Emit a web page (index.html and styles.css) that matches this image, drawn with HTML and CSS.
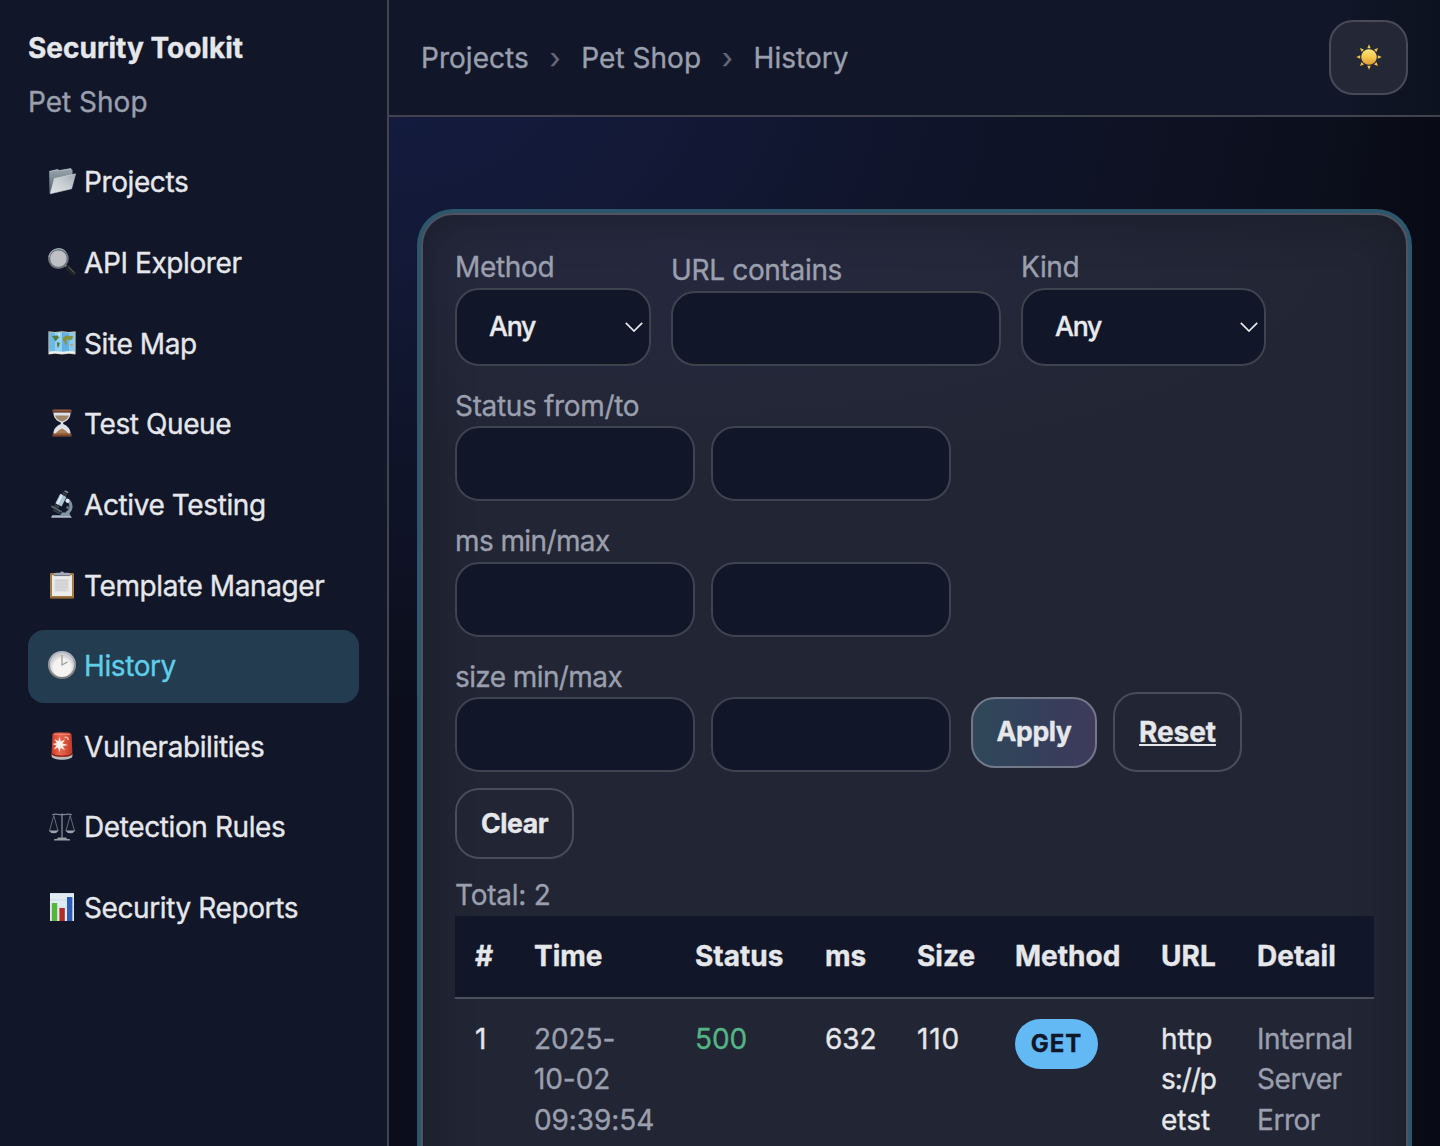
FILE: index.html
```html
<!DOCTYPE html>
<html lang="en">
<head>
<meta charset="utf-8">
<title>Security Toolkit</title>
<link rel="stylesheet" href="styles.css">
</head>
<body>
<div class="app">
  <aside class="sidebar">
    <div class="brand">Security Toolkit</div>
    <div class="project">Pet Shop</div>
    <nav class="nav">
      <a class="nav-item">
        <svg class="icon" viewBox="0 0 28 28">
          <defs>
            <linearGradient id="fb" x1="0" y1="0" x2="0" y2="1"><stop offset="0" stop-color="#9aa6ae"/><stop offset="1" stop-color="#54626c"/></linearGradient>
            <linearGradient id="ff" x1="1" y1="0" x2="0" y2="1"><stop offset="0" stop-color="#9fabb3"/><stop offset=".5" stop-color="#c9d0d4"/><stop offset="1" stop-color="#dde2e5"/></linearGradient>
          </defs>
          <path d="M1.2 3.5L9.5 1.6L11.4 2.6L23 .6L24.5 1.9V16L3.5 24.5L1.4 25.4Z" fill="url(#fb)"/>
          <path d="M1.2 3.5L9.5 1.6L11.4 2.6L23 .6" fill="none" stroke="#c2cbd0" stroke-width=".8"/>
          <path d="M6.3 10.6L27.6 5.8L23.6 20.8L2.3 25.8Z" fill="url(#ff)" stroke="#dce1e4" stroke-width=".5"/>
        </svg>Projects</a>
      <a class="nav-item">
        <svg class="icon" viewBox="0 0 28 28">
          <path d="M17.5 17.5L20.3 20.2" stroke="#8d9196" stroke-width="2.4"/>
          <path d="M20 19.8L25.4 25.2" stroke="#202224" stroke-width="5" stroke-linecap="round"/>
          <path d="M20.7 19.2L26.2 24.5" stroke="#6d7175" stroke-width="1" stroke-linecap="round"/>
          <circle cx="10.4" cy="10.6" r="9.3" fill="#bfc0c5" stroke="#6e747b" stroke-width="2.2"/>
          <path d="M1 9A9.8 9.8 0 0 1 17.5 3.5" fill="none" stroke="#aab6c4" stroke-width="1"/>
        </svg>API Explorer</a>
      <a class="nav-item">
        <svg class="icon" viewBox="0 0 28 28">
          <path d="M.4 2.2L7 3L14 2.2L21 3L27.6 2.2V25.6L21 24.8L14 25.6L7 24.8L.4 25.6Z" fill="#d8c9a5"/>
          <path d="M1.2 3L7 3.7V23.4L1.2 24Z" fill="#6bb8ea"/><path d="M7 3.7L14 3V24L7 23.4Z" fill="#8fd0f4"/>
          <path d="M14 3L21 3.7V23.4L14 24Z" fill="#62b0e4"/><path d="M21 3.7L26.8 3V24L21 23.4Z" fill="#8bcbf0"/>
          <path d="M4 7L9.4 6.6L11 8.6L9 10.6L7.8 12.4L5.6 9.6ZM9 13L11.8 14L11 17L9.8 19L9 16Z" fill="#547c38"/>
          <path d="M15 8.6L18 6.4L25 7L24.4 10L21.6 11.6L20 10L18.4 11.2L18.8 14L17.6 16.6L16.4 13L14.8 11Z" fill="#879241"/>
          <path d="M22.2 15L25 15.4L24.4 17.2L22.4 16.6Z" fill="#d99a3c"/><path d="M10 4.6L12 4.4L11.6 7Z" fill="#e9f0f2"/>
          <path d="M1.2 22.6L7 22L14 22.8L21 22L26.8 22.6V24.8L21 24L14 25L7 24L1.2 25Z" fill="#e4f0f4"/>
        </svg>Site Map</a>
      <a class="nav-item">
        <svg class="icon" viewBox="0 0 28 28">
          <path d="M5.4 3.2H22.6C22.6 9 19.5 11.6 15.2 13.6V15C19.5 16.8 22.6 20 22.6 25H5.4C5.4 20 8.5 16.8 12.8 15V13.6C8.5 11.6 5.4 9 5.4 3.2Z" fill="#dfe1e8"/>
          <path d="M7 6.4H21C20.4 9 18 10.9 14 12.6C10 10.9 7.6 9 7 6.4Z" fill="#a08468"/>
          <path d="M14 19.4C16.5 20.5 19.2 22.4 20.6 25H7.4C8.8 22.4 11.5 20.5 14 19.4" fill="#a97f4d"/>
          <rect x="4.2" y=".4" width="19.6" height="3.2" rx="1.2" fill="#70412a"/><rect x="4.2" y="24.4" width="19.6" height="3.4" rx="1.2" fill="#70412a"/>
          <path d="M5.5 1.2H22.5M5.5 25.3H22.5" stroke="#ab7550" stroke-width=".7"/>
        </svg>Test Queue</a>
      <a class="nav-item">
        <svg class="icon" viewBox="0 0 28 28">
          <path d="M18 9.5C24.5 12 24.5 20 18.5 23.5" fill="none" stroke="#7d91a0" stroke-width="3.2"/>
          <path d="M3 27.8L4.2 25.2H22L24 27.8Z" fill="#a9bac5"/><path d="M14 22.4H21L22.4 25.4H12Z" fill="#8296a6"/>
          <path d="M3.4 16.2L13.6 22" stroke="#59656e" stroke-width="2"/><path d="M5 20L12 23.6" stroke="#3e474f" stroke-width="1.4"/>
          <path d="M12.2 3.8L18.4 6.9L13.6 16.4L7.4 13.2Z" fill="#a9c4d4"/><path d="M13 4.2L15 5.2L10.2 14.8L8.3 13.7Z" fill="#dae9f0"/>
          <path d="M15.2 1.8L19.4 3.8L18.2 6.6L13.8 4.4Z" fill="#343b43"/><path d="M17 .2L20.6 2L19.8 3.2L16.2 1.4Z" fill="#8a949b"/>
          <path d="M7 14L11.6 16.4L10.4 18.4L6.3 16.2Z" fill="#3b444d"/><circle cx="19.5" cy="10.8" r="2.1" fill="#e2e8eb"/><circle cx="19.8" cy="17.5" r="1.6" fill="#5e6c77"/>
        </svg>Active Testing</a>
      <a class="nav-item">
        <svg class="icon" viewBox="0 0 28 28">
          <rect x="2" y="2" width="24" height="25.5" rx="1.2" fill="#a57c45"/><path d="M2.6 27H25.4" stroke="#76552b" stroke-width="1.2"/>
          <rect x="4" y="4.2" width="20" height="20.8" fill="#ebebec"/><rect x="6.5" y="8" width="14" height="12.5" fill="#d9d9dc"/><path d="M8 10H20M8 13H20M8 16H20M8 19H17" stroke="#cdcdd0" stroke-width="1.2"/>
          <path d="M5.8 5V2.6L8 1.8H12A2.2 2.2 0 0 1 16 1.8H20L22.2 2.6V5Z" fill="#a5a9b7"/><path d="M6 4.6H22" stroke="#70747f" stroke-width="1"/>
        </svg>Template Manager</a>
      <a class="nav-item active">
        <svg class="icon" viewBox="0 0 28 28">
          <defs><linearGradient id="ck" x1="0" y1="0" x2="0" y2="1"><stop offset="0" stop-color="#b4bbca"/><stop offset="1" stop-color="#77777a"/></linearGradient>
          <radialGradient id="cf" cx=".5" cy=".6" r=".5"><stop offset=".7" stop-color="#f5f4f3"/><stop offset="1" stop-color="#d0cfcf"/></radialGradient></defs>
          <circle cx="14" cy="14" r="14" fill="url(#ck)"/><circle cx="14" cy="14" r="12" fill="url(#cf)"/>
          <path d="M14 4V14L19.5 10.9" fill="none" stroke="#a2a09d" stroke-width="1.3"/>
        </svg>History</a>
      <a class="nav-item">
        <svg class="icon" viewBox="0 0 28 28">
          <defs><linearGradient id="rl" x1="0" y1="0" x2="1" y2="0"><stop offset="0" stop-color="#c83a28"/><stop offset=".4" stop-color="#ef6951"/><stop offset="1" stop-color="#bf3827"/></linearGradient></defs>
          <path d="M3.6 22H24.4V24C24.4 29 3.6 29 3.6 24Z" fill="#b9bcbc"/>
          <path d="M4.4 3Q4.6 .8 8 .5H20Q23.4.8 23.6 3L24.4 22C21 25.8 7 25.8 3.6 22Z" fill="url(#rl)"/>
          <path d="M6 2.4H22" stroke="#ef8a77"/><path d="M3.8 21.8C7 25 21 25 24.2 21.8" fill="none" stroke="#8b2219" stroke-width="1.3"/>
          <path d="M11.5 5L12.8 9.6L17 7.5L14.6 11.5L20 13L14.8 13.9L17 18.2L12.8 15.7L11.2 20L10 15.6L5.8 17.6L8.5 13.6L4.5 12L8.7 11L6.4 7L10.2 9.3Z" fill="#fff0e9"/>
          <path d="M16.5 5.5Q20.5 4.5 20 8" fill="none" stroke="#ffc0ae" stroke-width="1.4"/>
        </svg>Vulnerabilities</a>
      <a class="nav-item">
        <svg class="icon" viewBox="0 0 28 28">
          <g fill="none" stroke="#78808a" stroke-width=".8"><path d="M5.8 2.5L1.5 18M5.8 2.5L10 18M22.2 2.5L18 18M22.2 2.5L26.5 18"/></g>
          <path d="M4.2 1.7C8 .2 11 2.2 14 1.4C17 2.2 20 .2 23.8 1.7" fill="none" stroke="#7e868e" stroke-width="1.2"/>
          <path d="M14 .8V25" stroke="#858d95" stroke-width="1.3"/>
          <path d="M.6 17.6H10.8Q9 20.3 5.7 20.3T.6 17.6ZM17.2 17.6H27.4Q25.6 20.3 22.3 20.3T17.2 17.6Z" fill="#9ba2a8"/>
          <path d="M10 24.4H18L18.8 25.7L22 26.2V27.5H6V26.2L9.2 25.7Z" fill="#989fa5"/>
        </svg>Detection Rules</a>
      <a class="nav-item">
        <svg class="icon" viewBox="0 0 28 28">
          <rect x="2" y="0" width="24" height="28" fill="#e0ebf3"/><path d="M2 .5H26M2 7H26M2 14H26" stroke="#cad8e3" stroke-width=".7"/>
          <rect x="3.8" y="10" width="5.4" height="18" fill="#56b63b"/><rect x="11.4" y="15" width="5.4" height="13" fill="#b42a25"/><rect x="19" y="4" width="5.4" height="24" fill="#2b5db9"/>
        </svg>Security Reports</a>
    </nav>
  </aside>
  <div class="main">
    <header class="topbar">
      <div class="crumbs"><span>Projects</span><span class="sep">›</span><span>Pet Shop</span><span class="sep">›</span><span>History</span></div>
      <button class="theme-btn" aria-label="Theme">
        <svg class="sun" viewBox="0 0 26 26">
          <defs><linearGradient id="sn" x1="0" y1="0" x2="0" y2="1"><stop offset="0" stop-color="#fbe67c"/><stop offset=".5" stop-color="#f4c94f"/><stop offset="1" stop-color="#e19a35"/></linearGradient></defs>
          <circle cx="13" cy="13" r="7.8" fill="url(#sn)"/>
          <g fill="#edc650"><path id="ray" d="M11.3 4.2L13 .2L14.7 4.2Z"/><use href="#ray" transform="rotate(45 13 13)"/><use href="#ray" transform="rotate(90 13 13)"/><use href="#ray" transform="rotate(135 13 13)"/><use href="#ray" transform="rotate(180 13 13)"/><use href="#ray" transform="rotate(225 13 13)"/><use href="#ray" transform="rotate(270 13 13)"/><use href="#ray" transform="rotate(315 13 13)"/></g>
        </svg>
      </button>
    </header>
    <section class="card">
      <form class="filters">
        <div class="filter-row">
          <label class="field method">Method
            <span class="select-wrap"><select class="control select"><option>Any</option></select><svg class="chevron" viewBox="0 0 18 10"><path d="M.8.8L9 9L17.2.8"/></svg></span></label>
          <label class="field url">URL contains<input class="control"></label>
          <label class="field kind">Kind
            <span class="select-wrap"><select class="control select"><option>Any</option></select><svg class="chevron" viewBox="0 0 18 10"><path d="M.8.8L9 9L17.2.8"/></svg></span></label>
        </div>
        <div class="field"><span>Status from/to</span><div class="pair"><input class="control"><input class="control"></div></div>
        <div class="field tight"><span>ms min/max</span><div class="pair"><input class="control"><input class="control"></div></div>
        <div class="filter-row">
          <div class="field tight"><span>size min/max</span><div class="pair"><input class="control"><input class="control"></div></div>
          <div class="actions"><button type="button" class="btn primary">Apply</button><a class="btn reset">Reset</a></div>
        </div>
      </form>
      <button class="btn clear">Clear</button>
      <div class="total">Total: 2</div>
      <table class="history">
        <colgroup><col class="c-num"><col class="c-time"><col class="c-status"><col class="c-ms"><col class="c-size"><col class="c-method"><col class="c-url"><col class="c-detail"></colgroup>
        <thead><tr><th>#</th><th>Time</th><th>Status</th><th>ms</th><th>Size</th><th>Method</th><th>URL</th><th>Detail</th></tr></thead>
        <tbody><tr><td>1</td><td class="muted">2025-<br>10-02<br>09:39:54</td><td class="status">500</td><td>632</td><td class="size">110</td><td><span class="badge">GET</span></td><td class="url-cell">http<br><span class="url-mid">s://p</span><br>etst</td><td class="muted detail">Internal Server Error</td></tr></tbody>
      </table>
    </section>
  </div>
</div>
</body>
</html>
```

FILE: styles.css
```css
* { box-sizing: border-box; }
html, body { height: 100%; }
body {
  margin: 0;
  overflow: hidden;
  background: #0a0c18;
  color: #e6e7ea;
  font: 400 28px/1.45 Inter, "Liberation Sans", sans-serif;
  -webkit-text-stroke: .35px;
}
.app { display: flex; height: 1146px; overflow: hidden; }
.sidebar {
  flex: none;
  width: 389px;
  padding: 28px;
  background: #111628;
  border-right: 2px solid #41444f;
}
.brand { font-weight: 700; }
.project { margin-top: 13px; color: #9a9fad; }
.nav { display: flex; flex-direction: column; gap: 8px; margin-top: 24px; }
.nav-item {
  display: flex;
  align-items: center;
  gap: 8px;
  height: 72.67px;
  padding: 0 20px;
  border-radius: 16px;
  white-space: nowrap;
  letter-spacing: -.4px;
}
.nav-item.active { background: #233c4f; color: #60cde9; }
.icon { flex: none; width: 28px; height: 28px; margin-top: -2px; }
.main {
  flex: 1;
  min-width: 0;
  background:
    linear-gradient(to right, transparent 960px, rgba(3, 7, 16, .5) 1051px),
    radial-gradient(1000px 620px at 0 90px, #141c40 0, #11162f 45%, rgba(12, 14, 28, 0) 100%),
    #0b0e1a;
}
.topbar {
  display: flex;
  align-items: center;
  justify-content: space-between;
  height: 117px;
  padding: 0 32px;
  background: linear-gradient(to right, #111628 960px, #0d121f 1051px);
  border-bottom: 2px solid #41444f;
}
.crumbs { display: flex; gap: 20.8px; padding-top: 2px; color: #9a9fad; letter-spacing: .04px; }
.sep { opacity: .6; }
.theme-btn {
  display: flex;
  align-items: center;
  justify-content: center;
  width: 79px;
  height: 75px;
  padding: 0 0 2px 0;
  background: #232736;
  border: 2px solid #484b57;
  border-radius: 24px;
}
.sun { width: 26px; height: 26px; }
.card {
  height: 1100px;
  margin: 96px 32px 0;
  padding: 32px;
  border: 2px solid #50525f;
  border-radius: 32px;
  background: radial-gradient(700px 240px at 250px 30px, #26293f, rgba(34, 37, 50, 0)), #222533;
  box-shadow: 0 0 0 4px #2b566b, inset 0 0 48px rgba(10, 14, 22, .38);
}
.filters { display: flex; flex-direction: column; gap: 20px; }
.filter-row { display: flex; align-items: flex-end; gap: 20px; }
.field { display: flex; flex-direction: column; color: #9a9fad; letter-spacing: -.33px; }
.tight { letter-spacing: -.6px; }
.method { width: 196px; }
.url { width: 330px; }
.kind { width: 245px; }
.pair { display: flex; gap: 16px; }
.control {
  display: block;
  width: 100%;
  height: 75px;
  padding: 0 24px;
  background: #111628;
  color: #e9eaed;
  border: 2px solid #3f424f;
  border-radius: 24px;
  font: 500 26.67px/1.3 Inter, "Liberation Sans", sans-serif;
  letter-spacing: -1.2px;
}
.pair .control { width: 240px; }
.select-wrap { position: relative; display: block; }
.select { height: 78px; padding: 0 32px; appearance: none; }
.chevron {
  position: absolute;
  right: 8px;
  top: 34px;
  width: 18px;
  height: 10px;
  fill: none;
  stroke: #e9eaed;
  stroke-width: 1.7;
}
.actions { display: flex; align-items: center; gap: 16px; }
.btn {
  display: flex;
  align-items: center;
  justify-content: center;
  height: 71px;
  padding: 0 0 2px;
  background: none;
  border: 2px solid #4a4d59;
  border-radius: 24px;
  color: #e6e7ea;
  font: 700 26.67px/1.45 Inter, "Liberation Sans", sans-serif;
  letter-spacing: -.45px;
}
.primary { width: 126px; background: linear-gradient(to right, #2f4859, #34405b 50%, #3f3a5b); border-color: #717889; }
.reset { width: 129px; height: 80px; padding: 0; font-size: 28px; letter-spacing: -.1px; text-decoration: underline; }
.clear { width: 119px; margin-top: 16px; }
.total { margin-top: 16px; color: #9a9fad; letter-spacing: -.25px; }
.history { width: 919px; table-layout: fixed; border-collapse: separate; border-spacing: 0; }
th, td { padding: 20px; text-align: left; vertical-align: top; }
th { background: #111628; border-bottom: 2px solid #4b4e5b; font-weight: 700; }
td { letter-spacing: -.1px; }
.muted { color: #9a9fad; }
.size { letter-spacing: .9px; }
.url-cell { letter-spacing: 0; }
.url-mid { letter-spacing: -1.1px; }
.detail { letter-spacing: -.45px; }
.status { color: #54b584; }
.c-num { width: 59px; }
.c-time { width: 161px; }
.c-status { width: 130px; }
.c-ms { width: 92px; }
.c-size { width: 98px; }
.c-method { width: 146px; }
.c-url { width: 96px; }
.c-detail { width: 137px; }
.badge {
  display: flex;
  align-items: center;
  justify-content: center;
  width: 83px;
  height: 50px;
  padding-top: 2px;
  border-radius: 25px;
  background: #63b9f3;
  color: #10172a;
  font-size: 24px;
  font-weight: 700;
  letter-spacing: 1px;
}
```
